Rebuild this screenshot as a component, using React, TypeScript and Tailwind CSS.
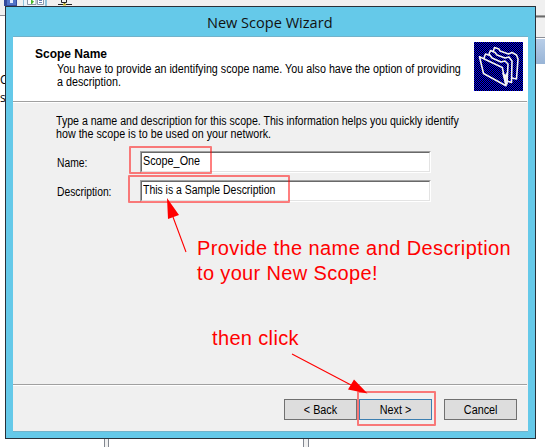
import type { ReactNode } from 'react';

function Label({ children, className = '' }: { children: ReactNode; className?: string }) {
  return (
    <span className={`block w-max origin-left whitespace-nowrap text-[12px] leading-[13px] ${className}`}>
      {children}
    </span>
  );
}

function Field({ label, value, labelClass, valueClass }: { label: string; value: string; labelClass: string; valueClass: string }) {
  return (
    <div className="flex h-[22px]">
      <div className="w-[84px] pl-px pt-[6px]">
        <Label className={labelClass}>{label}</Label>
      </div>
      <div className="h-[22px] w-[291px] border border-b-white border-l-[#a0a0a0] border-r-white border-t-[#a0a0a0]">
        <div className="h-full border border-b-[#e3e3e3] border-l-[#696969] border-r-[#e3e3e3] border-t-[#696969] bg-white pl-px pt-[2px]">
          <Label className={valueClass}>{value}</Label>
        </div>
      </div>
    </div>
  );
}

function WizardButton({ children, active = false }: { children: ReactNode; active?: boolean }) {
  return (
    <button
      className={`flex h-[21px] w-[73px] items-center justify-center border bg-[#dddddd] pt-px ${active ? 'border-[#3c7fb1]' : 'border-[#707070]'}`}
    >
      <span className="block scale-x-[0.9] whitespace-nowrap text-[12px] leading-[13px]">{children}</span>
    </button>
  );
}

function FolderIcon() {
  return (
    <svg width="49" height="49" viewBox="0 0 49 49" className="block">
      <defs>
        <pattern id="dither" width="2" height="2" patternUnits="userSpaceOnUse">
          <rect width="2" height="2" fill="#000000" shapeRendering="crispEdges" />
          <path d="M0 0h1v1H0zM1 1h1v1H1z" fill="#0000f4" shapeRendering="crispEdges" />
        </pattern>
      </defs>
      <rect width="49" height="49" fill="url(#dither)" />
      <g fill="url(#dither)" stroke="#f4f4f4" strokeWidth="1.6" strokeLinejoin="round">
        <path d="M19 10 L20.5 5.5 L25 7 L26 9 L34.5 12 L38 10.5 L42.5 13 L44 17 L42.5 37 L38 36 Z" />
        <path d="M15 12 L16.5 8.5 L21 10.5 L23 13 L31 16 L35 15 L38 19 L37.5 40.5 L33 39 Z" />
        <path d="M10 16 L11.5 12 L16 13.5 L18 16 L27 20 L31 19 L34 22 L33 42 L10 28 Z" />
        <path d="M5.5 14.7 L28.3 25.5 L32 43.7 L9.5 31.5 Z" />
        <path d="M28.5 31 L31.5 33 L33.5 30 L32 43.5 Z" fill="#f4f4f4" strokeWidth="0.7" />
      </g>
    </svg>
  );
}

function Backdrop() {
  return (
    <div className="absolute inset-0 overflow-hidden bg-white">
      <div className="absolute inset-x-0 top-0 h-[15px] bg-[#f0f0f0]" />
      <div className="absolute left-0 top-[15px] h-px w-[6px] bg-[#8c8f98]" />
      <svg width="80" height="6" className="absolute left-0 top-0">
        <rect x="4" width="13" height="6" fill="#344b9c" />
        <rect x="7" width="9" height="5" fill="#5274c9" />
        <path d="M10 0h3v3h-3z" fill="#e8edff" />
        <rect x="23" width="24" height="6" fill="#8fc3dc" />
        <rect x="24" width="21" height="6" fill="#edf5fa" />
        <path d="M27.5 0V4.5H36V0M37.5 0V4.5H43.5V0" fill="white" stroke="#8d98a8" />
        <path d="M31 0h1l2 1.5L32 4h-1Z" fill="#48b82a" />
        <path d="M39 .5h3M39 2.5h3" stroke="#6684b4" />
        <path d="M61.5 0v2.5h5V0M64.5 2v2M58 4.5h14" fill="none" stroke="#222222" />
        <rect x="63" y="3.5" width="3" height="2" fill="#c8b52a" />
      </svg>
      <span className="absolute left-0 top-[73px] font-['Open_Sans',sans-serif] text-[12px] leading-[14px]">C</span>
      <span className="absolute left-0 top-[91px] font-['Open_Sans',sans-serif] text-[12px] leading-[14px]">s</span>
      <div className="absolute right-0 top-[15px] flex w-[10px] flex-col">
        <div className="h-px bg-[#a0a0a0]" />
        <div className="h-px bg-[#696969]" />
        <div className="h-px bg-[#b0b0b0]" />
        <div className="h-[19px] bg-[#f0f0f0]" />
        <div className="h-px bg-[#8c8f98]" />
        <div className="h-px bg-white" />
        <div className="h-[25px] bg-gradient-to-b from-[#b8cee8] to-[#98b4d6]" />
      </div>
      <div className="absolute bottom-0 left-[104px] h-2 w-[5px] border-x border-[#828790] bg-[#f0f0f0]" />
      <div className="absolute bottom-0 left-[303px] h-2 w-[6px] border-x border-[#828790] bg-[#f0f0f0]" />
    </div>
  );
}

function Annotations() {
  return (
    <div className="pointer-events-none absolute inset-0 text-[#ff0000]">
      <div className="absolute left-[129px] top-[146px] h-[28px] w-[83px] rounded-[1px] border-2 border-[#ff0000]/50" />
      <div className="absolute left-[128px] top-[175px] h-[28px] w-[162px] rounded-[1px] border-2 border-[#ff0000]/50" />
      <div className="absolute left-[357px] top-[391px] h-[35px] w-[79px] rounded-[1px] border-2 border-[#ff0000]/50" />
      <svg width="545" height="447" className="absolute inset-0">
        <path d="M186 252L173 217M292 354L351 385" stroke="#ff0000" strokeWidth="1.1" />
        <path d="M167 198L168 219L179 215ZM367.5 393.5L354 379.5L348 389.5Z" fill="#ff0000" />
      </svg>
      <div className="absolute left-[197px] top-[236px] text-[20px] leading-[25px]">
        <div className="w-max whitespace-nowrap tracking-[0.4px]">Provide the name and Description</div>
        <div className="w-max whitespace-nowrap tracking-[0.35px]">to your New Scope!</div>
      </div>
      <div className="absolute left-[212px] top-[326px] w-max whitespace-nowrap text-[20px] leading-[25px] tracking-[0.35px]">then click</div>
    </div>
  );
}

export default function App() {
  return (
    <main className="relative h-[447px] w-[545px] overflow-hidden font-['Liberation_Sans',sans-serif] text-black">
      <Backdrop />
      <div className="relative pl-[5px] pt-[6px]">
        <section className="flex h-[433px] w-[531px] flex-col border border-[#293039] bg-[#65c9e9] px-[7px] pb-[6px]">
          <h1 className="flex h-[29px] shrink-0 items-center justify-center pr-[2px] font-['Open_Sans',sans-serif] text-[15px] leading-[20px] text-[#111111]">
            <span className="block scale-x-[0.97] whitespace-nowrap">New Scope Wizard</span>
          </h1>
          <div className="flex min-h-0 flex-1 flex-col border-y border-[#72b3cb] bg-[#f0f0f0]">
            <header className="flex h-[64px] shrink-0 justify-between bg-white pl-[22px] pr-[5px] pt-[5px]">
              <div className="pt-[6px]">
                <Label className="font-bold">Scope Name</Label>
                <div className="pl-[22px] pt-[2px]">
                  <Label className="scale-x-[0.895]">You have to provide an identifying scope name. You also have the option of providing</Label>
                  <Label className="scale-x-[0.895]">a description.</Label>
                </div>
              </div>
              <div className="-ml-20 shrink-0"><FolderIcon /></div>
            </header>
            <div className="mr-px h-[2px] shrink-0 border-b border-t border-b-white border-t-[#a0a0a0]" />
            <div className="flex-1 pl-[43px] pt-[12px]">
              <Label className="scale-x-[0.882]">Type a name and description for this scope. This information helps you quickly identify</Label>
              <Label className="scale-x-[0.893]">how the scope is to be used on your network.</Label>
              <div className="mt-[10px] flex flex-col gap-[7px]">
                <Field label="Name:" value="Scope_One" labelClass="scale-x-[0.86]" valueClass="scale-x-[0.9]" />
                <Field label="Description:" value="This is a Sample Description" labelClass="scale-x-[0.86]" valueClass="scale-x-[0.87]" />
              </div>
            </div>
            <footer className="h-[47px] shrink-0">
              <div className="mr-px h-[2px] border-b border-t border-b-white border-t-[#a0a0a0]" />
              <div className="flex justify-end pr-[11px] pt-[13px]">
                <WizardButton>&lt; Back</WizardButton>
                <div className="ml-[2px] mr-[12px]"><WizardButton active>Next &gt;</WizardButton></div>
                <WizardButton>Cancel</WizardButton>
              </div>
            </footer>
          </div>
        </section>
      </div>
      <Annotations />
    </main>
  );
}
